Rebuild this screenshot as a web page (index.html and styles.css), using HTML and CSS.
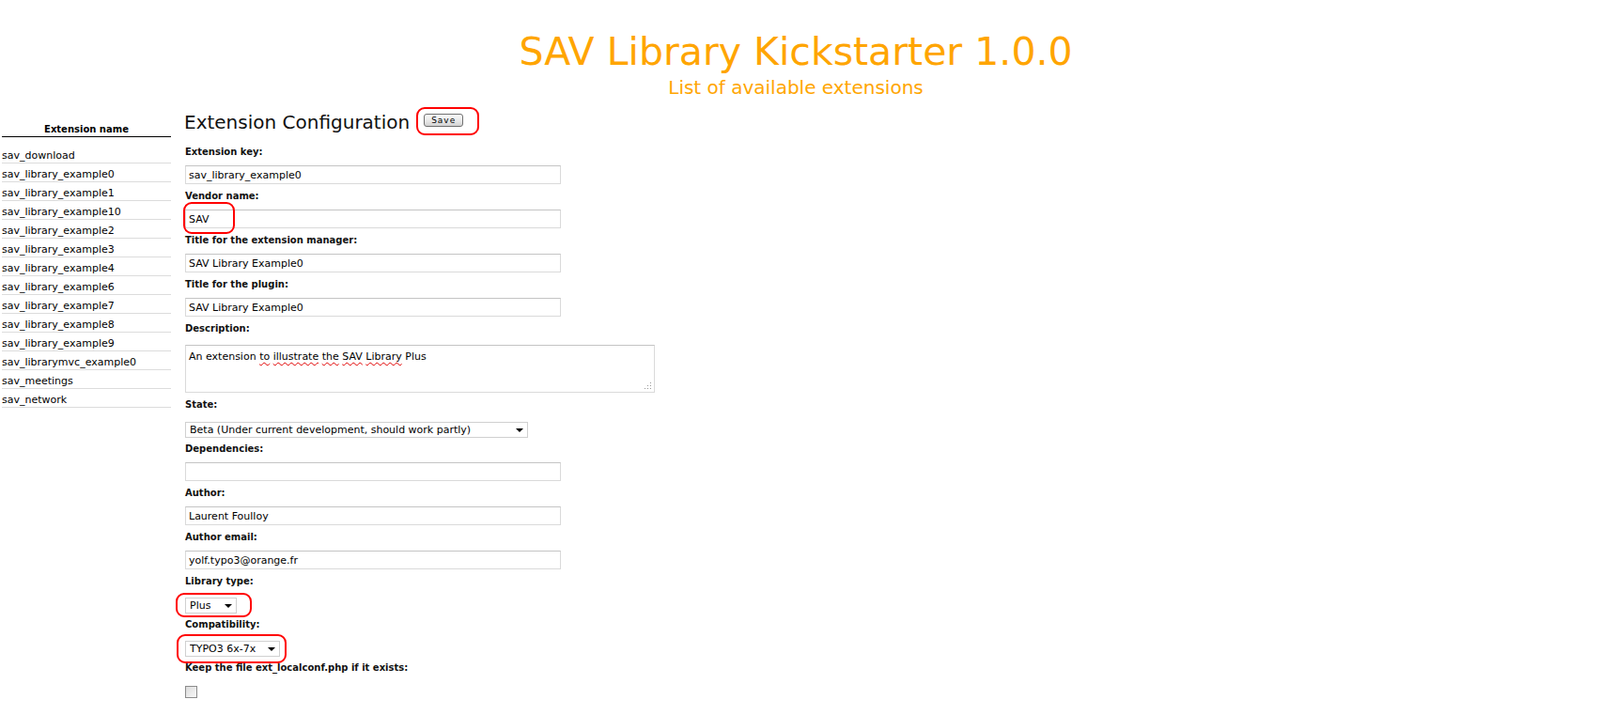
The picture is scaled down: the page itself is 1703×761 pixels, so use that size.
FILE: index.html
```html
<!DOCTYPE html>
<html lang="en">
<head>
<meta charset="utf-8">
<title>SAV Library Kickstarter</title>
<link rel="stylesheet" href="styles.css">
</head>
<body>
<header class="page-head">
  <h1 class="title">SAV Library Kickstarter 1.0.0</h1>
  <div class="subtitle">List of available extensions</div>
</header>
<div class="main">
  <aside class="ext-list">
    <div class="ext-head">Extension name</div>
    <ul class="ext-items">
      <li>sav_download</li>
      <li>sav_library_example0</li>
      <li>sav_library_example1</li>
      <li>sav_library_example10</li>
      <li>sav_library_example2</li>
      <li>sav_library_example3</li>
      <li>sav_library_example4</li>
      <li>sav_library_example6</li>
      <li>sav_library_example7</li>
      <li>sav_library_example8</li>
      <li>sav_library_example9</li>
      <li>sav_librarymvc_example0</li>
      <li>sav_meetings</li>
      <li>sav_network</li>
    </ul>
  </aside>
  <section class="config">
    <div class="config-head">
      <h2 class="config-title">Extension Configuration</h2>
      <span class="marked save-wrap"><button class="btn-save" type="button">Save</button><span class="mark mark-save"></span></span>
    </div>

    <div class="field">
      <label class="lbl">Extension key:</label>
      <input class="text" type="text" value="sav_library_example0">
    </div>
    <div class="field">
      <label class="lbl">Vendor name:</label>
      <div class="marked text-wrap"><input class="text" type="text" value="SAV"><span class="mark mark-vendor"></span></div>
    </div>
    <div class="field">
      <label class="lbl">Title for the extension manager:</label>
      <input class="text" type="text" value="SAV Library Example0">
    </div>
    <div class="field">
      <label class="lbl">Title for the plugin:</label>
      <input class="text" type="text" value="SAV Library Example0">
    </div>
    <div class="field">
      <label class="lbl">Description:</label>
      <div class="textarea">An extension <span class="sp">to</span> <span class="sp">illustrate</span> <span class="sp">the</span> <span class="sp">SAV</span> <span class="sp">Library</span> Plus<svg class="grip" width="9" height="9" viewBox="0 0 9 9"><rect x="7" y="1" width="1" height="1"/><rect x="7" y="4" width="1" height="1"/><rect x="4" y="4" width="1" height="1"/><rect x="7" y="7" width="1" height="1"/><rect x="4" y="7" width="1" height="1"/><rect x="1" y="7" width="1" height="1"/></svg></div>
    </div>
    <div class="field">
      <label class="lbl">State:</label>
      <span class="sel sel-state"><select><option>Beta (Under current development, should work partly)</option></select></span>
    </div>
    <div class="field">
      <label class="lbl">Dependencies:</label>
      <input class="text" type="text" value="">
    </div>
    <div class="field">
      <label class="lbl">Author:</label>
      <input class="text" type="text" value="Laurent Foulloy">
    </div>
    <div class="field">
      <label class="lbl">Author email:</label>
      <input class="text" type="text" value="yolf.typo3@orange.fr">
    </div>
    <div class="field">
      <label class="lbl">Library type:</label>
      <span class="sel sel-lib marked"><select><option>Plus</option></select><span class="mark mark-lib"></span></span>
    </div>
    <div class="field">
      <label class="lbl">Compatibility:</label>
      <span class="sel sel-compat marked"><select><option>TYPO3 6x-7x</option></select><span class="mark mark-compat"></span></span>
    </div>
    <div class="field">
      <label class="lbl">Keep the file ext_localconf.php if it exists:</label>
      <input class="check" type="checkbox">
    </div>
  </section>
</div>
</body>
</html>
```

FILE: styles.css
```css
html, body {
  margin: 0;
  padding: 0;
  background: #ffffff;
}

body {
  font-family: "DejaVu Sans", Verdana, sans-serif;
  color: #000000;
  overflow: hidden;
}

/* ---------- page header ---------- */
.page-head {
  padding: 32px 9px 0 0;
  text-align: center;
  color: #ffa500;
  height: 73px;
}

.title {
  margin: 0;
  font-size: 41px;
  font-weight: normal;
  line-height: 46px;
}

.subtitle {
  margin-top: 3px;
  font-size: 20px;
  line-height: 24px;
}

/* ---------- main layout ---------- */
.main {
  display: flex;
  align-items: flex-start;
}

/* ---------- extension list ---------- */
.ext-list {
  width: 180px;
  margin: 26px 0 0 2px;
  flex: none;
}

.ext-head {
  font-size: 10px;
  font-weight: bold;
  line-height: 14px;
  text-align: center;
  border-bottom: 1px solid #000000;
}

.ext-items {
  list-style: none;
  margin: 8px 0 0;
  padding: 0;
}

.ext-items li {
  font-size: 11px;
  line-height: 14px;
  height: 14px;
  padding-top: 5px;
  border-bottom: 1px solid #dcdcdc;
  white-space: nowrap;
}

/* ---------- configuration form ---------- */
.config {
  margin-left: 15px;
  padding-top: 13px;
}

.config-head {
  display: flex;
  align-items: flex-start;
  margin-bottom: 13px;
}

.config-title {
  margin: 0 0 0 -1px;
  font-size: 20px;
  font-weight: normal;
  line-height: 24px;
  color: #111111;
}

.marked {
  position: relative;
}

.save-wrap {
  display: block;
  margin: 3px 0 0 15px;
}

.btn-save {
  display: block;
  width: 42px;
  height: 14px;
  box-sizing: border-box;
  padding: 0;
  border: 1px solid #707070;
  border-radius: 3px;
  background: linear-gradient(#fbfbfb, #e6e6e6 60%, #d2d2d2);
  font-family: "DejaVu Sans", Verdana, sans-serif;
  font-size: 9px;
  letter-spacing: 1px;
  line-height: 11px;
  color: #000000;
}

.mark {
  position: absolute;
  box-sizing: border-box;
  border: 2px solid #ff0000;
  border-radius: 9px;
  pointer-events: none;
}

.mark-save {
  left: -8px;
  top: -7px;
  width: 67px;
  height: 30px;
}

.mark-vendor {
  left: -2px;
  top: -8px;
  width: 55px;
  height: 34px;
}

.mark-lib {
  left: -10px;
  top: -5px;
  width: 81px;
  height: 26px;
}

.mark-compat {
  left: -9px;
  top: -7px;
  width: 117px;
  height: 31px;
}

.lbl {
  display: block;
  font-size: 10px;
  font-weight: bold;
  line-height: 14px;
  color: #111111;
}

.text {
  display: block;
  box-sizing: border-box;
  width: 400px;
  height: 20px;
  margin: 7px 0 6px;
  padding: 0 3px;
  border: 1px solid #dadada;
  border-top-color: #c4c4c4;
  border-radius: 0;
  font-family: "DejaVu Sans", Verdana, sans-serif;
  font-size: 11px;
  color: #000000;
  background: #ffffff;
  outline: none;
}

.text-wrap {
  width: 400px;
  margin: 7px 0 6px;
}

.text-wrap .text {
  margin: 0;
}

.textarea {
  position: relative;
  box-sizing: border-box;
  width: 500px;
  height: 51px;
  margin: 10px 0 6px;
  padding: 5px 3px;
  border: 1px solid #dadada;
  border-top-color: #c4c4c4;
  font-size: 11px;
  line-height: 14px;
}

.sp {
  text-decoration: underline wavy #e00000;
  text-decoration-thickness: 1px;
  text-underline-offset: 2px;
}

.grip {
  position: absolute;
  right: 2px;
  bottom: 2px;
  fill: #9a9a9a;
}

.sel {
  display: block;
  position: relative;
  margin: 10px 0 5px;
}

.sel-state {
  width: 365px;
  margin-top: 11px;
}

.sel-lib {
  width: 55px;
}

.sel-compat {
  width: 101px;
  margin-top: 10px;
}

.sel select {
  display: block;
  box-sizing: border-box;
  width: 100%;
  height: 17px;
  margin: 0;
  padding: 0 0 0 4px;
  border: 1px solid #d0d0d0;
  border-radius: 0;
  background: #ffffff;
  font-family: "DejaVu Sans", Verdana, sans-serif;
  font-size: 11px;
  line-height: 15px;
  color: #000000;
  -webkit-appearance: none;
  appearance: none;
}

.sel::after {
  content: "";
  position: absolute;
  right: 5px;
  top: 7px;
  width: 0;
  height: 0;
  border-left: 4px solid transparent;
  border-right: 4px solid transparent;
  border-top: 4px solid #000000;
  pointer-events: none;
}

.check {
  display: block;
  box-sizing: border-box;
  width: 13px;
  height: 13px;
  margin: 12px 0 0;
  border: 1px solid #8c8c8c;
  border-radius: 0;
  background: linear-gradient(135deg, #dcdcdc, #f8f8f8);
  -webkit-appearance: none;
  appearance: none;
}
```
